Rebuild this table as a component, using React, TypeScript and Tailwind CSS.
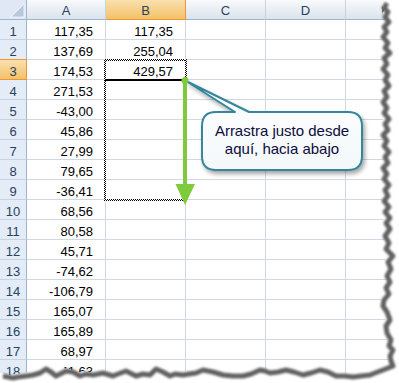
import React from "react";

const rows: [number, string, string][] = [
  [1, "117,35", "117,35"],
  [2, "137,69", "255,04"],
  [3, "174,53", "429,57"],
  [4, "271,53", ""],
  [5, "-43,00", ""],
  [6, "45,86", ""],
  [7, "27,99", ""],
  [8, "79,65", ""],
  [9, "-36,41", ""],
  [10, "68,56", ""],
  [11, "80,58", ""],
  [12, "45,71", ""],
  [13, "-74,62", ""],
  [14, "-106,79", ""],
  [15, "165,07", ""],
  [16, "165,89", ""],
  [17, "68,97", ""],
  [18, "41,63", ""],
];

const rightEdge =
  "384,0 381,5 385,9 382,14 386,19 381,24 384,29 380,34 385,40 382,45 387,50 381,55 384,61 380,66 385,72 382,77 386,83 381,88 384,94 380,99 384,105 381,110 386,116 382,121 385,127 380,132 384,138 381,143 386,149 382,154 385,160 380,165 384,171 381,176 386,182 382,187 385,193 381,198 386,204 382,209 387,215 383,220 387,226 382,233 386,240 383,246 390,253 385,259 388,266 384,273 387,279 383,285 386,291 381,297 380,303 384,309 387,317 383,323 384,330 388,337 386,343 390,347 387,353 388,358 390,363";
const bottomEdge =
  "380,367 372,370 367,372 358,373 350,374 342,373 333,373 325,369 317,367 308,370 300,372 291,369 283,367 275,369 267,370 262,368 257,367 248,371 240,373 230,373 220,372 210,369 200,367 193,370 186,371 180,372 172,371 167,373 160,369 153,366 147,372 140,371 133,373 123,368 115,371 110,373 100,370 90,372 83,371 77,373 70,369 63,368 57,371 53,373 48,369 43,366 37,370 30,372 23,373 15,374 10,375 0,373";

const ants =
  "absolute bg-[image:conic-gradient(#000_25%,#fff_0_50%,#000_0_75%,#fff_0)] bg-[length:2px_2px]";

function ColHeader({ label, width, active }: { label: string; width: string; active?: boolean }) {
  return (
    <div
      className={
        active
          ? `${width} flex h-[20px] shrink-0 items-end justify-center border-r border-b border-[#f29536] bg-linear-to-b from-[#fae0ad] to-[#f2c266] pb-[1px] leading-[15px] text-[#27415f]`
          : `${width} flex h-[20px] shrink-0 items-end justify-center border-r border-b border-r-[#c5d2e2] border-b-[#9eb6ce] bg-linear-to-b from-[#f8fafc] to-[#dbe3ec] pb-[1px] leading-[15px] text-[#27415f]`
      }
    >
      {label}
    </div>
  );
}

export default function App() {
  return (
    <div className="relative h-[383px] w-[399px] overflow-hidden bg-white font-['Liberation_Sans',Arial,sans-serif] text-[13px] text-black">
      {/* Column headers */}
      <div className="flex h-[20px]">
        <div className="relative h-[20px] w-[27px] shrink-0 border-r border-b border-[#9eb6ce] bg-[#dfe8f4]">
          <svg className="absolute left-0 top-0" width="27" height="20" viewBox="0 0 27 20">
            <polygon points="24,4 24,17 11,17" fill="#b8c8dc" stroke="#f4f7fb" strokeWidth="0.8" />
          </svg>
        </div>
        <ColHeader label="A" width="w-[79px]" />
        <ColHeader label="B" width="w-[80px]" active />
        <ColHeader label="C" width="w-[80px]" />
        <ColHeader label="D" width="w-[80px]" />
        <ColHeader label="E" width="w-[80px]" />
      </div>

      {/* Rows */}
      {rows.map(([n, a, b]) => (
        <div key={n} className="flex h-[20px]">
          <div
            className={
              n === 3
                ? "flex h-[20px] w-[27px] shrink-0 items-end justify-center border-r border-b border-[#f29536] bg-linear-to-b from-[#fae0ad] to-[#f2c266] leading-[15px] text-[#27415f]"
                : n === 2
                  ? "flex h-[20px] w-[27px] shrink-0 items-end justify-center border-r border-b border-r-[#9eb6ce] border-b-[#f29536] bg-[#e4ecf7] leading-[15px] text-[#27415f]"
                  : "flex h-[20px] w-[27px] shrink-0 items-end justify-center border-r border-b border-r-[#9eb6ce] border-b-[#c5d3e4] bg-[#e4ecf7] leading-[15px] text-[#27415f]"
            }
          >
            {n}
          </div>
          <div className="flex h-[20px] w-[79px] shrink-0 items-end justify-end border-r border-b border-[#d0d7e5] pr-[12px] leading-[15px]">
            {a}
          </div>
          <div className="flex h-[20px] w-[80px] shrink-0 items-end justify-end border-r border-b border-[#d0d7e5] pr-[12px] leading-[15px]">
            {b}
          </div>
          <div className="h-[20px] w-[80px] shrink-0 border-r border-b border-[#d0d7e5]" />
          <div className="h-[20px] w-[80px] shrink-0 border-r border-b border-[#d0d7e5]" />
          <div className="h-[20px] w-[80px] shrink-0 border-r border-b border-[#d0d7e5]" />
        </div>
      ))}

      {/* Copy range marching ants */}
      <div className={`${ants} left-[104px] top-[59px] h-[2px] w-[83px]`} />
      <div className={`${ants} left-[104px] top-[199px] h-[2px] w-[83px]`} />
      <div className={`${ants} left-[104px] top-[59px] h-[142px] w-[2px]`} />
      <div className={`${ants} left-[185px] top-[59px] h-[142px] w-[2px]`} />

      {/* Active cell bottom edge */}
      <div className="absolute left-[105px] top-[79px] h-[2px] w-[79px] bg-black" />

      {/* Callout and arrow */}
      <svg className="pointer-events-none absolute left-0 top-0" width="399" height="383" viewBox="0 0 399 383">
        <defs>
          <filter id="callShadow" x="-20%" y="-30%" width="140%" height="160%">
            <feDropShadow dx="2" dy="3" stdDeviation="2" floodColor="#000" floodOpacity="0.35" />
          </filter>
          <linearGradient id="callFill" x1="0" y1="0" x2="0" y2="1">
            <stop offset="0" stopColor="#ffffff" />
            <stop offset="1" stopColor="#f3f8fa" />
          </linearGradient>
        </defs>
        <path
          d="M216 112 L235 112 L186 81 L249 112 L348 112 Q362 112 362 126 L362 156 Q362 170 348 170 L216 170 Q202 170 202 156 L202 126 Q202 112 216 112 Z"
          fill="url(#callFill)"
          stroke="#34869c"
          strokeWidth="2"
          strokeLinejoin="round"
          filter="url(#callShadow)"
        />
        <line x1="185" y1="81" x2="185" y2="186" stroke="#7dcb3c" strokeWidth="4" />
        <polygon points="175.5,184 195,184 185,205" fill="#7dcb3c" />
        <circle cx="185" cy="80.5" r="3.5" fill="#7dcb3c" />
      </svg>

      <div className="absolute left-[202px] top-[112px] flex h-[58px] w-[160px] flex-col items-center justify-center pb-[2px] text-[15px] leading-[18px] text-[#0d0d3b]">
        <span>Arrastra justo desde</span>
        <span>aquí, hacia abajo</span>
      </div>

      {/* Torn paper edge */}
      <svg className="pointer-events-none absolute left-0 top-0" width="399" height="383" viewBox="0 0 399 383">
        <defs>
          <filter id="tornBlur" x="-5%" y="-5%" width="110%" height="110%">
            <feGaussianBlur stdDeviation="0.9" />
          </filter>
        </defs>
        <path
          fillRule="evenodd"
          fill="#ffffff"
          d={`M0 0 H399 V383 H0 Z M0 0 L${rightEdge.replace(/ /g, " L")} L${bottomEdge.replace(/ /g, " L")} Z`}
        />
        <g transform="translate(3,3)" filter="url(#tornBlur)">
          <polyline points={`${rightEdge} ${bottomEdge}`} fill="none" stroke="#626262" strokeWidth="5" strokeLinejoin="round" />
        </g>
      </svg>
    </div>
  );
}
